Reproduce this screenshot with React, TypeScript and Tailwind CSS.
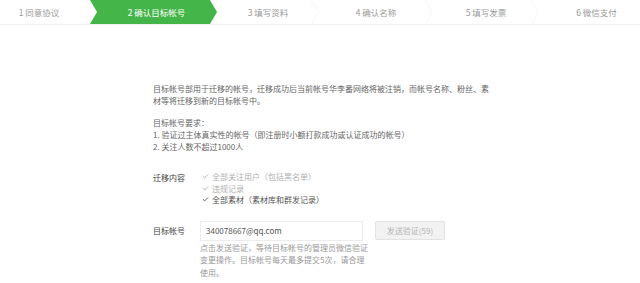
import { Check } from 'lucide-react';

const font = { fontFamily: '"Noto Sans CJK SC", "Liberation Sans", sans-serif' };

function Chevron() {
  return (
    <svg className="absolute right-0 top-0 h-[25px] w-[8px]" viewBox="0 0 8 25" fill="none">
      <path d="M0 0 L7 12.5 L0 25" stroke="#f6f6f6" strokeWidth="1" />
    </svg>
  );
}

function Steps() {
  const rest = [
    { label: '3 填写资料', w: 'w-[102px]' },
    { label: '4 确认名称', w: 'w-[114px]' },
    { label: '5 填写发票', w: 'w-[106px]' },
    { label: '6 微信支付', w: 'w-[101px]' },
  ];
  return (
    <div className="flex h-[25px] border-b border-[#efefef] text-[8.5px] text-[#9a9a9a]">
      <div className="flex w-[90px] items-center justify-center pr-[12px]">1 同意协议</div>
      <div
        className="flex w-[127px] items-center justify-center bg-[#44b549] pl-[6px] text-white"
        style={{ clipPath: 'polygon(0 0, 120px 0, 127px 50%, 120px 100%, 0 100%, 7px 50%)' }}
      >
        2 确认目标帐号
      </div>
      {rest.map((t, i) => (
        <div key={t.label} className={`relative flex ${t.w} items-center justify-center ${i === 3 ? 'pl-[14px]' : ''}`}>
          {t.label}
          {i < 3 && <Chevron />}
        </div>
      ))}
    </div>
  );
}

export default function App() {
  const items = [
    { text: '全部关注用户（包括黑名单）', muted: true },
    { text: '违规记录', muted: true },
    { text: '全部素材（素材库和群发记录）', muted: false },
  ];

  return (
    <div className="h-[283px] w-[640px] overflow-hidden bg-white" style={font}>
      <Steps />

      <div className="pl-[153px] pt-[58px] text-[8px] leading-[12px] text-[#666]">
        <p className="w-[340px]">
          目标帐号部用于迁移的帐号，迁移成功后当前帐号华李番网络将被注销，而帐号名称、粉丝、素材等将迁移到新的目标帐号中。
        </p>

        <div className="mt-[10px]">
          <p>目标帐号要求：</p>
          <p>1. 验证过主体真实性的帐号（即注册时小额打款成功或认证成功的帐号）</p>
          <p>2. 关注人数不超过1000人</p>
        </div>

        <div className="mt-[18px] flex">
          <div className="w-[47px] pt-[1px] text-[#444]">迁移内容</div>
          <div className="flex flex-col leading-[11.5px]">
            {items.map((it) => (
              <div key={it.text} className="flex items-center gap-[3px]">
                <Check className={`ml-[2px] h-[7px] w-[7px] ${it.muted ? 'text-[#aaa]' : 'text-[#555]'}`} strokeWidth={3} />
                <span className={it.muted ? 'text-[#b0b0b0]' : 'text-[#555]'}>{it.text}</span>
              </div>
            ))}
          </div>
        </div>

        <div className="mt-[15px] flex">
          <div className="w-[47px] pt-[4px] text-[#444]">目标帐号</div>
          <div className="flex flex-col">
            <div className="flex items-center">
              <div className="flex h-[20px] w-[163px] items-center border border-[#ececec] pl-[5px] text-[#555]">
                340078667@qq.com
              </div>
              <div className="ml-[12px] flex h-[19px] w-[70px] items-center justify-center rounded-[2px] border border-[#e2e2e2] bg-[#f2f2f2] text-[#b5b5b5]">
                发送验证(59)
              </div>
            </div>
            <p className="mt-[1px] w-[172px] leading-[12.5px] text-[#999]">
              点击发送验证，等待目标帐号的管理员微信验证变更操作。目标帐号每天最多提交5次，请合理使用。
            </p>
          </div>
        </div>
      </div>
    </div>
  );
}
